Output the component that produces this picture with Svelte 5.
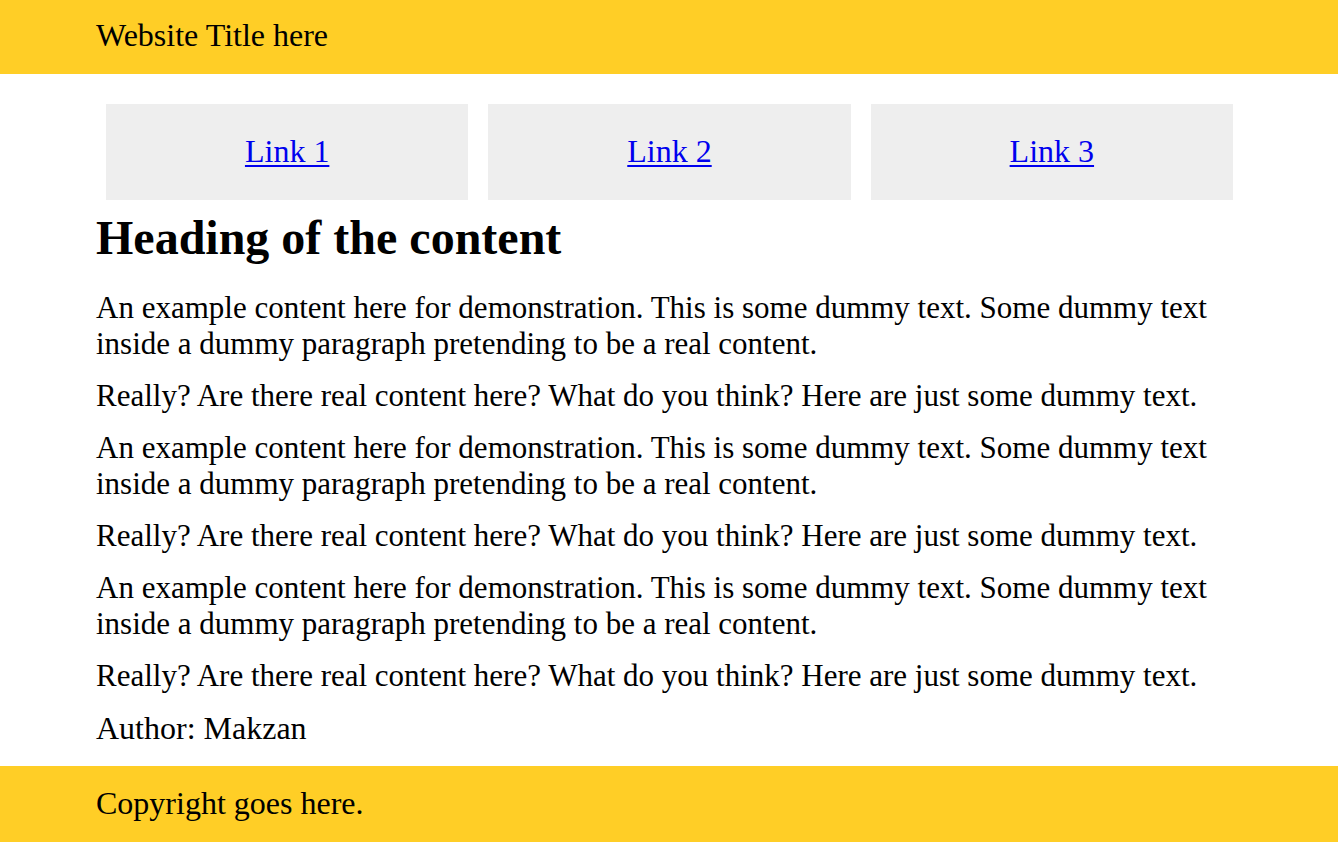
<script>
  const links = ['Link 1', 'Link 2', 'Link 3'];
  const sections = [1, 2, 3];
</script>

<header class="band">
  <div class="container">Website Title here</div>
</header>

<nav class="container" aria-label="Main">
  <ul>
    {#each links as link}
      <li><a href="#top">{link}</a></li>
    {/each}
  </ul>
</nav>

<main class="container">
  <h1>Heading of the content</h1>
  {#each sections as section (section)}
    <p>An example content here for demonstration. This is some dummy text. Some dummy text inside a dummy paragraph pretending to be a real content.</p>
    <p>Really? Are there real content here? What do you think? Here are just some dummy text.</p>
  {/each}
  <div class="author">Author: Makzan</div>
</main>

<footer class="band">
  <div class="container">Copyright goes here.</div>
</footer>

<style>
  :global(body) {
    margin: 0;
    background: #fff;
    color: #000;
    font-family: "Liberation Serif", "Times New Roman", serif;
    font-size: 32px;
    line-height: 36px;
  }

  .container {
    box-sizing: border-box;
    padding: 0 96px;
  }

  .band {
    padding: 17px 0 21px;
    background: #ffce26;
  }

  footer.band {
    padding-top: 19px;
  }

  nav {
    margin-top: 30px;
  }

  ul {
    display: grid;
    grid-template-columns: repeat(3, 1fr);
    gap: 20px;
    margin: 0;
    padding: 0 9px 0 10px;
    list-style: none;
  }

  li {
    padding: 29px 0 31px;
    background: #eee;
    text-align: center;
  }

  a {
    color: #00e;
    text-decoration: underline;
    text-decoration-thickness: 2px;
    text-underline-offset: 3px;
  }

  h1 {
    margin: 11px 0 25px;
    font-size: 48px;
    line-height: 54px;
  }

  p {
    margin: 0 0 16px;
    font-size: 31px;
  }

  .author {
    margin-bottom: 20px;
  }
</style>
